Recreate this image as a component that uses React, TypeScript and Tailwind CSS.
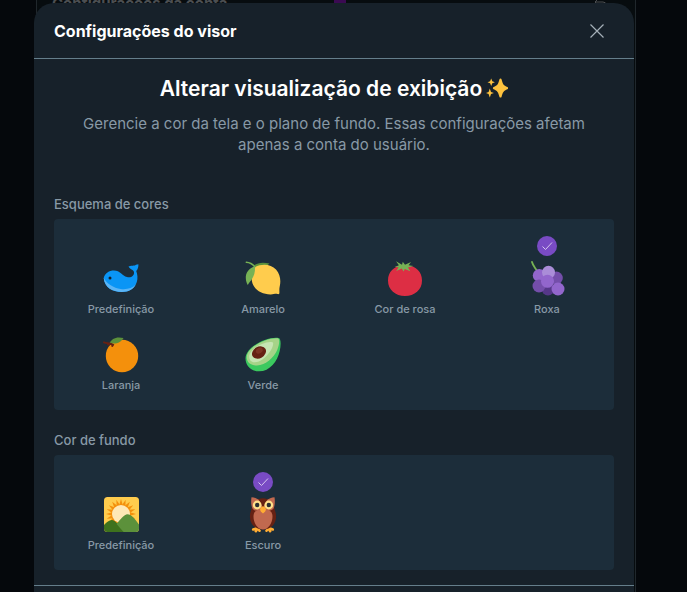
import { useState } from "react";
import type { ReactNode } from "react";

type Option = { id: string; label: string; icon: ReactNode };

function Sparkles() {
  return (
    <svg viewBox="0 0 22 22" className="size-[22px]" fill="#fdc23e" aria-hidden="true">
      <path d="M14.500.6c.6 0 .9.4 1.100 1 1.100 4.500 2 6 5.800 7.500 1 .4 1 1.700 0 2.100-3.800 1.500-4.700 3-5.800 7.500-.3 1.200-1.900 1.200-2.200 0-1.100-4.500-2-6-5.800-7.500-1-.4-1-1.700 0-2.100 3.800-1.500 4.700-3 5.800-7.500.2-.6.5-1 1.100-1z" />
      <path d="M5.200.4 6.300 3.200 8.900 4.200 6.300 5.200 5.200 8 4.100 5.200 1.500 4.200 4.100 3.200zM3.800 10.600 5 13.900 7.900 15 5 16.100 3.800 19.600 2.600 16.100 0 15 2.600 13.900z" />
    </svg>
  );
}

function Whale() {
  return (
    <svg viewBox="0 0 36 36" className="size-9" aria-hidden="true">
      <path fill="#0a95f5" d="M.7 17C2 12 6 9.500 11 9.500c6 0 8.300 5.300 13 6.500 4 1 7.500-1 7-5-.5-2.500-4-2.500-5.500-5.500 2.500-1.700 5.500.1 7.500-1.700l2.400-.6c.2 2.700-.6 5.300-2.200 6.800 1.300 3 1.800 7.500.6 11C31.500 28 25.500 31 19 31 9 31 1.500 26 .7 17z" />
      <path fill="#5bb4f5" d="M.7 17c3 5.500 10 10 17 11 6 .8 12-.8 15.200-4.700C30.500 28.500 25 31 19 31 9 31 1.500 26 .7 17z" />
      <circle cx="7" cy="17" r="1.500" fill="#17202a" />
    </svg>
  );
}

function Lemon() {
  return (
    <svg viewBox="0 0 36 36" className="size-9" aria-hidden="true">
      <path fill="#5c913b" d="M9 4.500c4-3.300 10-3.200 15.500-2-3 3.200-8 4.200-14 3.500z" />
      <path fill="#ffcc4d" d="M10 6C17 2.500 26 3 31 8.500c4.500 5 5 11.500 3.700 17-.6 2.500-.2 4.500-.3 6.500-.1 1.200-1 1.300-2 1-2-.5-4 .5-7 .4C18 33.300 11 30 8.200 24 5.500 18 6 10 10 6z" />
      <path fill="#77b255" d="M9.500 5.500C4 7 .5 12 .8 17c.1 3 1 5.500 2 7C4.200 20.500 10.500 17 10 6z" />
      <path fill="none" stroke="#77b255" strokeWidth="1.500" strokeLinecap="round" d="M1.300 1.200c3.500.2 6.200 1.800 8.500 4.600" />
    </svg>
  );
}

function Tomato() {
  return (
    <svg viewBox="0 0 36 36" className="size-9" aria-hidden="true">
      <path fill="#dd2e44" d="M18 5C27.500 3.500 35 10 35 19.500S27.500 35 18 35 1 29 1 19.500 8.500 3.500 18 5z" />
      <path fill="#77b255" d="m9 .2 6 3.600.8-3 2.200 2.900 6-2.700-2.400 3.300 4.700.8-5.300 1.500 2.300 3.600-5.500-2.300-1.300 2.600-1.700-3-5.500 2.500 2.300-3.700-4-.2 4.300-1.800z" />
    </svg>
  );
}

function Grapes() {
  return (
    <svg viewBox="0 0 36 36" className="size-9" aria-hidden="true">
      <path fill="none" stroke="#77b255" strokeWidth="1.800" strokeLinecap="round" d="M3 1c.7 3 2.500 5 4.500 8" />
      <circle cx="19" cy="28" r="6.500" fill="#553788" />
      <circle cx="10.300" cy="14.500" r="6.500" fill="#9266cc" />
      <circle cx="27.300" cy="17" r="6.500" fill="#744eaa" />
      <circle cx="19.500" cy="11.300" r="6.500" fill="#aa8dd8" />
      <circle cx="10" cy="25" r="6.500" fill="#744eaa" />
      <circle cx="18.500" cy="20.300" r="6.500" fill="#9266cc" />
      <circle cx="29" cy="28" r="6.500" fill="#9266cc" />
    </svg>
  );
}

function Orange() {
  return (
    <svg viewBox="0 0 36 36" className="size-9" aria-hidden="true">
      <circle cx="19" cy="19" r="16.200" fill="#f4900c" />
      <path fill="#5c913b" d="M6.500 6.300C8.500 1.500 13.500-.8 20.500 1c-2.500 4-6 6.500-14 5.300z" />
      <path fill="none" stroke="#662113" strokeWidth="1.900" strokeLinecap="round" d="M1 5.300c3 1.200 6 .8 9 2.600l-.7 1M5 7.600l2-1" />
    </svg>
  );
}

function Avocado() {
  return (
    <svg viewBox="0 0 36 36" className="size-9" aria-hidden="true">
      <path fill="#3bc95f" d="M33.500.9c2.700.6 2.500 7.100 1.200 13C32.500 24 25 34.300 14 34.300 6.500 34.300.5 29 .5 21.500.5 10 22-.8 33.500.9z" />
      <path fill="#a6d388" d="M32.800 1.300c2.200.6 1.500 6.700-.5 11.500C29 20.500 20.500 28.500 12 28.500c-6 0-10.300-3-10.300-8.300C1.700 10 22.500.2 32.800 1.300z" />
      <path fill="#c6e5b3" d="M27.500 5.300c1.800.8-.2 6.200-2.800 9.700C20.500 20.700 15 25.500 9.500 25.300 6 25.200 4 22.800 4.200 19 4.600 11.500 21.500 3 27.500 5.300z" />
      <ellipse cx="14" cy="15.500" rx="7.400" ry="5.700" transform="rotate(-30 14 15.500)" fill="#662113" />
      <ellipse cx="14.300" cy="13.600" rx="3.600" ry="2.700" transform="rotate(-30 14.300 13.600)" fill="#7c3323" />
    </svg>
  );
}

function Sunrise() {
  return (
    <svg viewBox="0 0 36 36" className="size-9" aria-hidden="true">
      <clipPath id="frame">
        <rect x="1" y="0" width="35" height="35" rx="3.500" />
      </clipPath>
      <g clipPath="url(#frame)">
        <path fill="#ffcc4d" d="M0 0h36v36H0z" />
        <g fill="#f4900c">
          {Array.from({ length: 20 }, (_, i) => (
            <path key={i} d="m18 2 2 7h-4z" transform={`rotate(${i * 18} 18 17)`} />
          ))}
        </g>
        <circle cx="18" cy="17" r="9" fill="#ffe8b6" />
        <path fill="#3e721d" d="M0 29c3-3 6-6 8.700-6 4 0 8 7 14 13H0z" />
        <path fill="#5c913b" d="M13.500 27c4-4.500 7.500-9.700 11-9.700S32 22 36 27.500V36H22c-2-1-5.500-6-8.500-9z" />
      </g>
    </svg>
  );
}

function Owl() {
  return (
    <svg viewBox="0 0 36 36" className="size-9" aria-hidden="true">
      <g fill="none" stroke="#ffac33" strokeWidth="2.600" strokeLinecap="round">
        <path d="m12.500 31-4.300 1.500m4.300-1-1.700 2.700m1.700-2.700 2 2.200" />
        <path d="m23.500 31 4.300 1.500m-4.300-1 1.700 2.700m-1.700-2.700-2 2.200" />
      </g>
      <path fill="#662113" d="M18 1.500c9 0 10.500 6 12 12C33.500 23 28.500 32.500 18 32.500S2.500 23 6 13.500C7.500 7.500 9 1.500 18 1.500z" />
      <path fill="#c1694f" d="M6.500.2C9.500.2 12 1.800 15 3.500l3 7 3-7c3-1.700 5.500-3.300 8.500-3.300.6 3.700.5 8.400-1 11.400-2 3-6.500 2.500-10.500 2.500S9.500 14.600 7.500 11.600C6 8.600 5.900 3.900 6.500.2z" />
      <path fill="#c1694f" d="M18 13.500c5-1.500 8.500-.3 9.300 4C28.500 24 24 32.500 18 32.500S7.500 24 8.700 17.500c.8-4.300 4.300-5.500 9.300-4z" />
      <path fill="#662113" d="M13.500 2.300c3-1 6-1 9 0L18 11z" />
      <circle cx="12.200" cy="8" r="4.400" fill="#ffe08a" />
      <circle cx="23.800" cy="8" r="4.400" fill="#ffe08a" />
      <circle cx="12.200" cy="8" r="2.200" fill="#292f33" />
      <circle cx="23.800" cy="8" r="2.200" fill="#292f33" />
      <path fill="#ffac33" d="M18 9.200c1.700.5 2.900 1.800 2.900 3.400 0 1.500-1.400 3-2.900 3.800-1.500-.8-2.900-2.300-2.900-3.800 0-1.600 1.200-2.900 2.900-3.400z" />
    </svg>
  );
}

const schemes: Option[] = [
  { id: "default", label: "Predefinição", icon: <Whale /> },
  { id: "yellow", label: "Amarelo", icon: <Lemon /> },
  { id: "pink", label: "Cor de rosa", icon: <Tomato /> },
  { id: "purple", label: "Roxa", icon: <Grapes /> },
  { id: "orange", label: "Laranja", icon: <Orange /> },
  { id: "green", label: "Verde", icon: <Avocado /> },
];

const backgrounds: Option[] = [
  { id: "light", label: "Predefinição", icon: <Sunrise /> },
  { id: "dark", label: "Escuro", icon: <Owl /> },
];

type PickerProps = {
  title: string;
  name: string;
  options: Option[];
  value: string;
  onChange: (id: string) => void;
};

function Picker({ title, name, options, value, onChange }: PickerProps) {
  return (
    <fieldset>
      <legend className="mb-1.5 text-[13px] leading-[18px] font-medium text-[#8899a6]">{title}</legend>
      <div className="grid grid-cols-4 gap-x-7 gap-y-5 rounded-sm bg-[#1c2d3a] px-2.5 pt-[42px] pb-[17px]">
        {options.map((opt) => (
          <label key={opt.id} className="relative flex cursor-pointer flex-col items-center gap-1">
            <input
              type="radio"
              name={name}
              checked={value === opt.id}
              onChange={() => onChange(opt.id)}
              className="sr-only"
            />
            {value === opt.id && (
              <span className="absolute bottom-full mb-[5px] flex size-5 items-center justify-center rounded-full bg-[#794bc4]">
                <svg viewBox="0 0 12 12" className="size-3" fill="none" stroke="#d5c6ee" aria-hidden="true">
                  <path d="m1.500 6.500 3 3 6.500-7" />
                </svg>
              </span>
            )}
            {opt.icon}
            <span className="text-[11px] leading-4 font-medium text-[#8899a6]">{opt.label}</span>
          </label>
        ))}
      </div>
    </fieldset>
  );
}

export default function App() {
  const [scheme, setScheme] = useState("purple");
  const [background, setBackground] = useState("dark");

  return (
    <div className="relative h-screen overflow-hidden bg-[#05080c] pr-[19px] font-['Inter',sans-serif]">
      {/* Page behind the dialog */}
      <div className="absolute inset-0 flex justify-center pr-[15px]" aria-hidden="true">
        <div className="relative w-full max-w-[600px] border-x border-[#20272c] bg-[#070c0f] px-[15px]">
          <div className="-mt-2 flex items-center justify-between text-[#4c4f52]">
            <span className="text-[15px] leading-6 font-bold">Configurações da conta</span>
            <svg viewBox="0 0 14 14" className="mr-3 size-3.5" fill="none" stroke="currentColor">
              <path d="M1 5h8a3 3 0 0 1 3 3M4 2 1 5l3 3" />
            </svg>
          </div>
          <span className="absolute -top-2 left-[297px] size-3 bg-[#3b0a52]" />
        </div>
      </div>

      {/* Dialog */}
      <div
        role="dialog"
        aria-modal="true"
        aria-labelledby="dialog-title"
        className="relative mx-auto mt-[3px] min-h-full max-w-[600px] rounded-t-[20px] bg-[#17212a]"
      >
        <header className="flex h-14 items-center justify-between border-b border-[#657e8b] pr-7 pl-5">
          <h2 id="dialog-title" className="text-base font-bold text-white">
            Configurações do visor
          </h2>
          <button type="button" aria-label="Fechar" className="cursor-pointer p-0.5 text-[#a5b0b8]">
            <svg viewBox="0 0 14 14" className="size-3.5" fill="none" stroke="currentColor">
              <path strokeWidth="1.200" d="m.5.5 13 13m0-13-13 13" />
            </svg>
          </button>
        </header>

        <main className="px-5 pt-[15px] pb-[15px]">
          <h1 className="flex items-center justify-center gap-1 text-[21px] leading-[30px] font-semibold text-white">
            Alterar visualização de exibição
            <Sparkles />
          </h1>
          <p className="mt-[9px] px-5 text-center text-[15px] leading-[21px] text-[#8899a6]">
            Gerencie a cor da tela e o plano de fundo. Essas configurações afetam apenas a conta do usuário.
          </p>

          <div className="mt-10 flex flex-col gap-[21px]">
            <Picker
              title="Esquema de cores"
              name="scheme"
              options={schemes}
              value={scheme}
              onChange={setScheme}
            />
            <Picker
              title="Cor de fundo"
              name="background"
              options={backgrounds}
              value={background}
              onChange={setBackground}
            />
          </div>
        </main>

        <footer className="h-14 border-t border-[#657e8b]" />
      </div>
    </div>
  );
}
